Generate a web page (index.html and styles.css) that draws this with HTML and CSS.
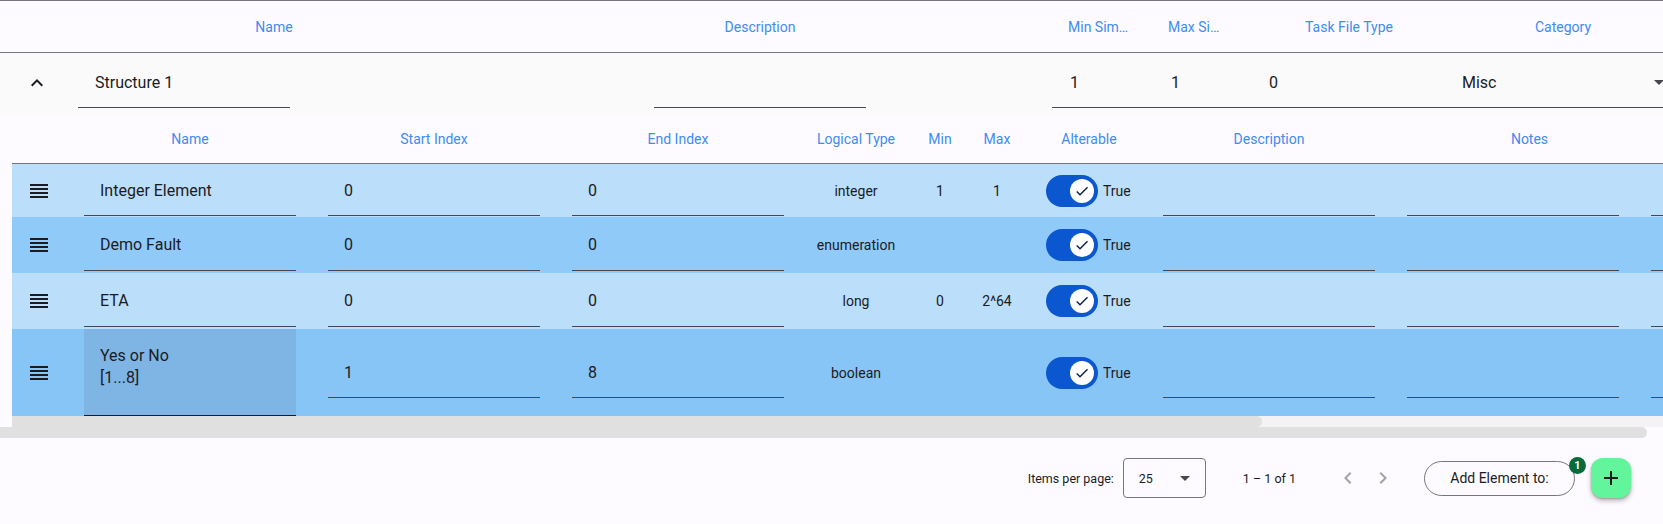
FILE: index.html
```html
<!DOCTYPE html>
<html>
<head>
<meta charset="utf-8">
<link rel="stylesheet" href="styles.css">
</head>
<body>
<div class="page">
  <div class="ohead">
    <div class="oh oh-name">Name</div>
    <div class="oh oh-desc">Description</div>
    <div class="oh oh-min">Min Sim…</div>
    <div class="oh oh-max">Max Si…</div>
    <div class="oh oh-task">Task File Type</div>
    <div class="oh oh-cat">Category</div>
  </div>

  <div class="srow">
    <div class="chev"><svg viewBox="0 0 24 24" width="24" height="24"><path d="M12 8l-6 6 1.41 1.41L12 10.83l4.59 4.58L18 14z"/></svg></div>
    <div class="sfld s-name">Structure 1</div>
    <div class="sfld s-desc"></div>
    <div class="sgroup">
      <div class="sc sc-min">1</div>
      <div class="sc sc-max">1</div>
      <div class="sc sc-task">0</div>
      <div class="sc sc-cat"><span>Misc</span><svg viewBox="0 0 24 24" width="24" height="24"><path d="M7 10l5 5 5-5z"/></svg></div>
    </div>
  </div>

  <div class="inner">
    <div class="ihead">
      <div class="c0"></div>
      <div class="c1 th">Name</div>
      <div class="c2 th">Start Index</div>
      <div class="c3 th">End Index</div>
      <div class="c4 th">Logical Type</div>
      <div class="c5 th">Min</div>
      <div class="c6 th">Max</div>
      <div class="c7 th th-alt">Alterable</div>
      <div class="c8 th">Description</div>
      <div class="c9 th th-notes">Notes</div>
      <div class="c10 th"></div>
    </div>

    <div class="row r-light r1">
      <div class="c0 handle"><svg viewBox="0 0 24 24" width="24" height="24"><path d="M3 15h18v-2H3v2zm0 4h18v-2H3v2zm0-8h18V9H3v2zm0-6v2h18V5H3z"/></svg></div>
      <div class="c1"><div class="fld">Integer Element</div></div>
      <div class="c2"><div class="fld">0</div></div>
      <div class="c3"><div class="fld">0</div></div>
      <div class="c4 sm">integer</div>
      <div class="c5 sm">1</div>
      <div class="c6 sm">1</div>
      <div class="c7 alt"><span class="tg"><span class="knob"><svg viewBox="0 0 24 24" width="16" height="16"><path d="M9 16.17L4.83 12l-1.42 1.41L9 19 21 7l-1.41-1.41z"/></svg></span></span><span class="tlabel">True</span></div>
      <div class="c8"><div class="fld"></div></div>
      <div class="c9"><div class="fld"></div></div>
      <div class="c10"><div class="fld"></div></div>
    </div>

    <div class="row r-dark r2">
      <div class="c0 handle"><svg viewBox="0 0 24 24" width="24" height="24"><path d="M3 15h18v-2H3v2zm0 4h18v-2H3v2zm0-8h18V9H3v2zm0-6v2h18V5H3z"/></svg></div>
      <div class="c1"><div class="fld">Demo Fault</div></div>
      <div class="c2"><div class="fld">0</div></div>
      <div class="c3"><div class="fld">0</div></div>
      <div class="c4 sm">enumeration</div>
      <div class="c5 sm"></div>
      <div class="c6 sm"></div>
      <div class="c7 alt"><span class="tg"><span class="knob"><svg viewBox="0 0 24 24" width="16" height="16"><path d="M9 16.17L4.83 12l-1.42 1.41L9 19 21 7l-1.41-1.41z"/></svg></span></span><span class="tlabel">True</span></div>
      <div class="c8"><div class="fld"></div></div>
      <div class="c9"><div class="fld"></div></div>
      <div class="c10"><div class="fld"></div></div>
    </div>

    <div class="row r-light r3">
      <div class="c0 handle"><svg viewBox="0 0 24 24" width="24" height="24"><path d="M3 15h18v-2H3v2zm0 4h18v-2H3v2zm0-8h18V9H3v2zm0-6v2h18V5H3z"/></svg></div>
      <div class="c1"><div class="fld">ETA</div></div>
      <div class="c2"><div class="fld">0</div></div>
      <div class="c3"><div class="fld">0</div></div>
      <div class="c4 sm">long</div>
      <div class="c5 sm">0</div>
      <div class="c6 sm">2^64</div>
      <div class="c7 alt"><span class="tg"><span class="knob"><svg viewBox="0 0 24 24" width="16" height="16"><path d="M9 16.17L4.83 12l-1.42 1.41L9 19 21 7l-1.41-1.41z"/></svg></span></span><span class="tlabel">True</span></div>
      <div class="c8"><div class="fld"></div></div>
      <div class="c9"><div class="fld"></div></div>
      <div class="c10"><div class="fld"></div></div>
    </div>

    <div class="row r-sel r4">
      <div class="c0 handle"><svg viewBox="0 0 24 24" width="24" height="24"><path d="M3 15h18v-2H3v2zm0 4h18v-2H3v2zm0-8h18V9H3v2zm0-6v2h18V5H3z"/></svg></div>
      <div class="c1 c-tall"><div class="fld fld-area">Yes or No<br>[1...8]</div></div>
      <div class="c2"><div class="fld">1</div></div>
      <div class="c3"><div class="fld">8</div></div>
      <div class="c4 sm">boolean</div>
      <div class="c5 sm"></div>
      <div class="c6 sm"></div>
      <div class="c7 alt"><span class="tg"><span class="knob"><svg viewBox="0 0 24 24" width="16" height="16"><path d="M9 16.17L4.83 12l-1.42 1.41L9 19 21 7l-1.41-1.41z"/></svg></span></span><span class="tlabel">True</span></div>
      <div class="c8"><div class="fld"></div></div>
      <div class="c9"><div class="fld"></div></div>
      <div class="c10"><div class="fld"></div></div>
    </div>
  </div>

  <div class="sb1"><div class="sb1-gap"></div><div class="sb1-thumb"></div></div>
  <div class="sb2"></div>

  <div class="footer">
    <span class="ipp">Items per page:</span>
    <div class="psel"><span>25</span><svg viewBox="0 0 24 24" width="24" height="24"><path d="M7 10l5 5 5-5z"/></svg></div>
    <span class="range">1 – 1 of 1</span>
    <div class="nav">
      <span class="navbtn"><svg viewBox="0 0 24 24" width="24" height="24"><path d="M15.41 7.41L14 6l-6 6 6 6 1.41-1.41L10.83 12z"/></svg></span>
      <span class="navbtn"><svg viewBox="0 0 24 24" width="24" height="24"><path d="M10 6L8.59 7.41 13.17 12l-4.58 4.59L10 18l6-6z"/></svg></span>
    </div>
    <div class="addbtn">Add Element to:<span class="badge">1</span></div>
    <div class="fab"><svg viewBox="0 0 24 24" width="24" height="24"><path d="M19 13h-6v6h-2v-6H5v-2h6V5h2v6h6v2z"/></svg></div>
  </div>
</div>
</body>
</html>
```

FILE: styles.css
```css
* { box-sizing: border-box; }
html, body { margin: 0; padding: 0; }
body {
  background: #fdfbff;
  font-family: Roboto, "Liberation Sans", Arial, sans-serif;
  color: #1c1b1f;
  overflow: hidden;
  width: 1663px;
  height: 524px;
}
.page { width: 1663px; }

/* outer header */
.ohead {
  display: flex;
  align-items: center;
  height: 53px;
  padding-left: 74px;
  border-top: 1px solid #767680;
  border-bottom: 1px solid #767680;
  font-size: 14px;
  color: #3f8cf2;
  white-space: nowrap;
}
.oh { flex: none; overflow: hidden; }
.oh-name { width: 400px; text-align: center; }
.oh-desc { width: 572px; text-align: center; }
.oh-min { width: 100px; margin-left: 6px; padding-left: 16px; }
.oh-max { width: 100px; padding-left: 16px; }
.oh-task { width: 194px; text-align: center; }
.oh-cat { width: 234px; text-align: center; }

/* structure row */
.srow {
  display: flex;
  align-items: flex-start;
  height: 62px;
  padding-top: 4px;
  background: #fafafa;
  font-size: 16px;
}
.chev {
  width: 78px;
  height: 51px;
  padding-right: 4px;
  display: flex;
  align-items: center;
  justify-content: center;
  flex: none;
}
.chev svg { fill: #1c1b1f; }
.sfld {
  height: 51px;
  width: 212px;
  padding-left: 17px;
  display: flex;
  align-items: center;
  border-bottom: 1px solid #49454f;
  flex: none;
}
.s-desc { margin-left: 364px; }
.sgroup {
  margin-left: 186px;
  flex: 1;
  height: 51px;
  display: flex;
  align-items: center;
  border-bottom: 1px solid #49454f;
}
.sc { flex: none; }
.sc-min { width: 100px; padding-left: 18px; }
.sc-max { width: 100px; padding-left: 19px; }
.sc-task { width: 190px; padding-left: 17px; }
.sc-cat {
  flex: 1;
  display: flex;
  align-items: center;
  justify-content: space-between;
  padding-left: 20px;
  margin-right: -8px;
}
.sc-cat svg { fill: #49454f; }

/* inner table */
.inner { margin-left: 12px; width: 1900px; }
.ihead {
  display: flex;
  align-items: center;
  height: 49px;
  border-bottom: 1px solid #767676;
  font-size: 14px;
  color: #3f8cf2;
}
.th { text-align: center; white-space: nowrap; }

.c0 { width: 56px; flex: none; }
.c1, .c2, .c3, .c8, .c9, .c10 { width: 244px; flex: none; padding: 0 16px; }
.c4 { width: 120px; flex: none; text-align: center; padding-right: 8px; }
.c5 { width: 40px; flex: none; text-align: center; }
.c6 { width: 74px; flex: none; text-align: center; }
.c7 { width: 113px; flex: none; }
.ihead .th-alt { padding-right: 3px; }
.ihead .th-notes { padding-left: 49px; }

.row { display: flex; align-items: center; }
.r1 { height: 53px; }
.r2 { height: 56px; }
.r3 { height: 56px; }
.r4 { height: 87px; }
.r-light { background: #bbdefb; }
.r-dark { background: #90caf9; }
.r-sel { background: #88c5f7; }

.handle { display: flex; justify-content: center; padding-right: 2px; }
.handle svg { fill: #1c1b1f; }

.fld {
  height: 51px;
  padding-left: 16px;
  display: flex;
  align-items: center;
  border-bottom: 1px solid #49454f;
  font-size: 16px;
  white-space: nowrap;
}
.c-tall { align-self: stretch; }
.fld-area {
  display: block;
  height: 87px;
  background: #7fb5e5;
  padding-top: 16px;
  line-height: 22px;
  border-bottom: 1px solid #1c1b1f;
}
.sm { font-size: 14px; }

.alt { display: flex; align-items: center; padding-left: 12px; gap: 5px; }
.tg {
  position: relative;
  width: 52px;
  height: 32px;
  border-radius: 16px;
  background: #0b57d0;
  flex: none;
}
.knob {
  position: absolute;
  top: 4px;
  left: 24px;
  width: 24px;
  height: 24px;
  border-radius: 50%;
  background: #ffffff;
  display: flex;
  align-items: center;
  justify-content: center;
}
.knob svg { fill: #041e49; }
.tlabel { font-size: 14px; }

/* scrollbars */
.sb1 { display: flex; height: 11px; background: #f4f2f5; }
.sb1-gap { width: 12px; background: #fdfbff; }
.sb1-thumb { width: 1250px; background: #e0e0e0; border-radius: 0 6px 6px 0; }
.sb2 { width: 1647px; height: 11px; background: #e0e0e0; border-radius: 0 6px 6px 0; }

/* footer */
.footer {
  display: flex;
  align-items: center;
  justify-content: flex-end;
  height: 80px;
  padding-right: 32px;
  font-size: 12.5px;
}
.ipp { margin-right: 9px; }
.psel {
  width: 83px;
  height: 40px;
  border: 1px solid #79747e;
  border-radius: 4px;
  display: flex;
  align-items: center;
  justify-content: space-between;
  padding: 0 8px 0 15px;
  font-size: 12.5px;
  margin-right: 37px;
}
.psel svg { fill: #49454f; }
.range { margin-right: 34px; }
.nav { display: flex; margin-right: 24px; }
.navbtn { width: 35px; display: flex; justify-content: center; }
.navbtn svg { fill: #a3a1a6; }
.addbtn {
  position: relative;
  width: 151px;
  height: 35px;
  border: 1px solid #79747e;
  border-radius: 18px;
  display: flex;
  align-items: center;
  justify-content: center;
  font-size: 14px;
  margin-right: 16px;
}
.badge {
  position: absolute;
  top: -5px;
  right: -12px;
  width: 17px;
  height: 17px;
  border-radius: 50%;
  background: #0a6b3a;
  color: #ffffff;
  font-size: 11px;
  font-weight: 700;
  display: flex;
  align-items: center;
  justify-content: center;
}
.fab {
  width: 40px;
  height: 40px;
  border-radius: 12px;
  background: #62f59c;
  display: flex;
  align-items: center;
  justify-content: center;
  box-shadow: 0 3px 5px rgba(0,0,0,0.25), 0 1px 2px rgba(0,0,0,0.2);
}
.fab svg { fill: #1c1b1f; }
```
